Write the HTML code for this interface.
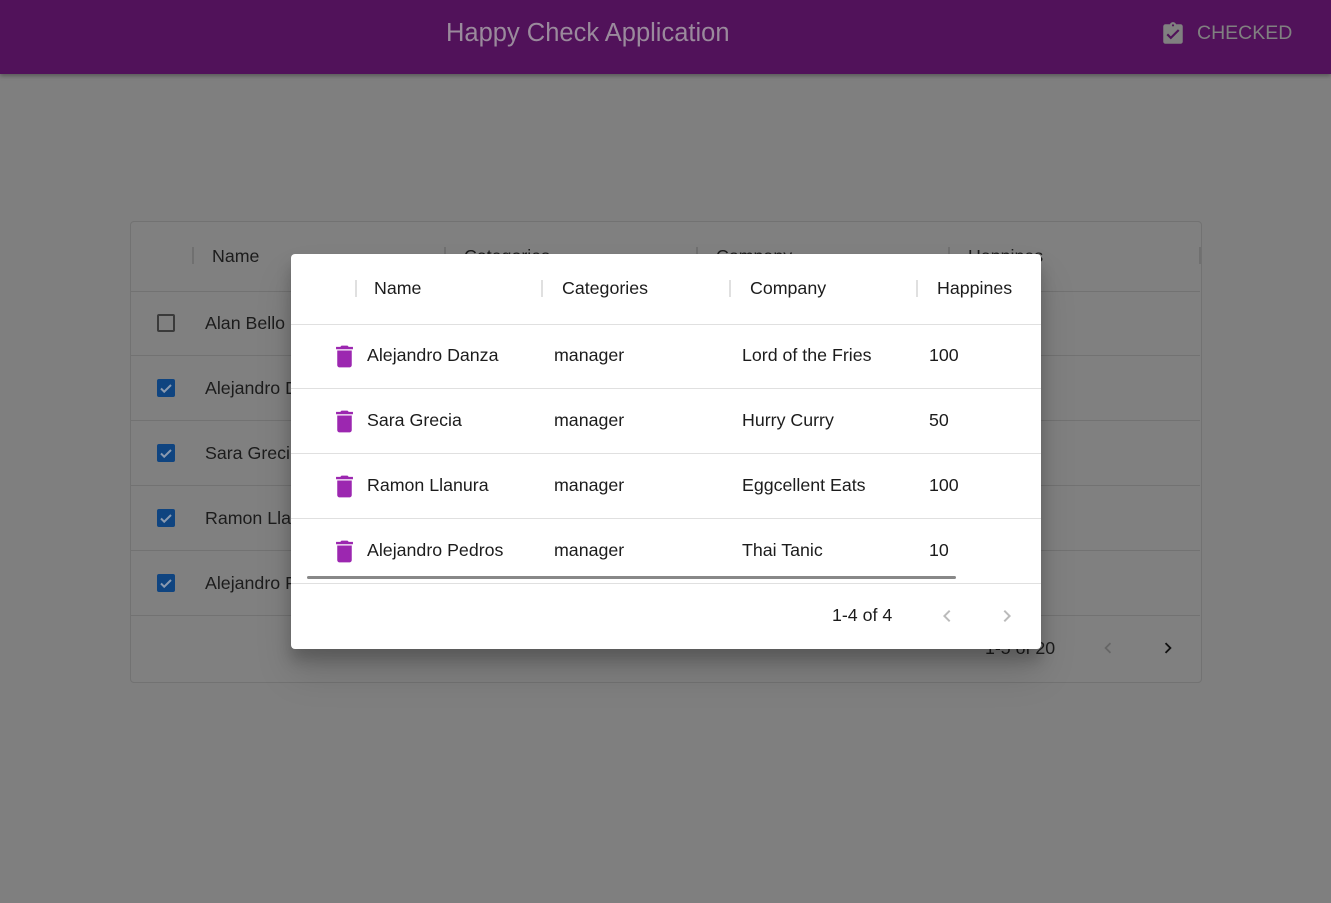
<!DOCTYPE html><html><head><style>
body{margin:0;width:1331px;height:903px;background:#7f7f7f;font-family:"Liberation Sans",sans-serif;position:relative;overflow:hidden;color:#1c1c1c}
.bar{position:absolute;left:0;top:0;width:1331px;height:74px;background:#51125a;box-shadow:0 2px 4px rgba(0,0,0,.3)}
.abs{position:absolute;white-space:nowrap}
.bg{position:absolute;left:130px;top:221px;width:1070px;height:460px;border:1px solid #727272;border-radius:4px;background:#808080}
.hl{position:absolute;height:1px;background:#727272}
.sep{position:absolute;width:2px;height:17px;background:#707070}
.cb{position:absolute;left:157px;width:18px;height:18px;border-radius:2px;background:#0f4480}
.modal{position:absolute;left:291px;top:254px;width:750px;height:395px;background:#fff;border-radius:4px;box-shadow:0 11px 15px rgba(0,0,0,.2),0 24px 38px rgba(0,0,0,.14)}
.ml{position:absolute;height:1px;background:#e0e0e0;left:0;width:750px}
.t{font-size:17.8px}
</style></head><body>
<div class="bar"></div>
<div class="abs" style="left:446px;top:19px;font-size:25.5px;color:#9a8a9c">Happy Check Application</div>
<svg class="abs" style="left:1160px;top:21px" width="26" height="26" viewBox="0 0 24 24"><path fill="#808080" d="M19 3h-4.18C14.4 1.84 13.3 1 12 1s-2.4.84-2.82 2H5c-1.1 0-2 .9-2 2v14c0 1.1.9 2 2 2h14c1.1 0 2-.9 2-2V5c0-1.1-.9-2-2-2zm-7 0c.55 0 1 .45 1 1s-.45 1-1 1-1-.45-1-1 .45-1 1-1zm-2 14l-4-4 1.41-1.41L10 14.17l6.59-6.59L18 9l-8 8z"/></svg>
<div class="abs" style="left:1197px;top:22px;font-size:19.5px;color:#808080">CHECKED</div>

<div class="bg"></div>
<div class="hl" style="left:131px;top:291px;width:1069px"></div>
<div class="hl" style="left:131px;top:355px;width:1069px"></div>
<div class="hl" style="left:131px;top:420px;width:1069px"></div>
<div class="hl" style="left:131px;top:485px;width:1069px"></div>
<div class="hl" style="left:131px;top:550px;width:1069px"></div>
<div class="hl" style="left:131px;top:615px;width:1069px"></div>
<div class="sep" style="left:192px;top:247px"></div>
<div class="sep" style="left:444px;top:247px"></div>
<div class="sep" style="left:696px;top:247px"></div>
<div class="sep" style="left:948px;top:247px"></div>
<div class="sep" style="left:1199px;top:247px"></div>
<div class="abs t" style="left:212px;top:246px">Name</div>
<div class="abs t" style="left:464px;top:246px">Categories</div>
<div class="abs t" style="left:716px;top:246px">Company</div>
<div class="abs t" style="left:968px;top:246px">Happines</div>
<div class="abs" style="left:157px;top:314px;width:14px;height:14px;border:2px solid #3a3a3a;border-radius:2px"></div>
<svg class="cb" style="top:379px" viewBox="0 0 18 18"><path d="M4 9.5l3.2 3.2L14 6" stroke="#8a9ab0" stroke-width="2" fill="none"/></svg>
<svg class="cb" style="top:444px" viewBox="0 0 18 18"><path d="M4 9.5l3.2 3.2L14 6" stroke="#8a9ab0" stroke-width="2" fill="none"/></svg>
<svg class="cb" style="top:509px" viewBox="0 0 18 18"><path d="M4 9.5l3.2 3.2L14 6" stroke="#8a9ab0" stroke-width="2" fill="none"/></svg>
<svg class="cb" style="top:574px" viewBox="0 0 18 18"><path d="M4 9.5l3.2 3.2L14 6" stroke="#8a9ab0" stroke-width="2" fill="none"/></svg>
<div class="abs t" style="left:205px;top:313px">Alan Bello</div>
<div class="abs t" style="left:205px;top:378px">Alejandro D</div>
<div class="abs t" style="left:205px;top:443px">Sara Greci</div>
<div class="abs t" style="left:205px;top:508px">Ramon Lla</div>
<div class="abs t" style="left:205px;top:573px">Alejandro P</div>
<div class="abs t" style="left:985px;top:638px">1-5 of 20</div>
<svg class="abs" style="left:1097px;top:637px" width="22" height="22" viewBox="0 0 24 24"><path d="M15.4 7.4L14 6l-6 6 6 6 1.4-1.4L10.8 12z" fill="#666"/></svg>
<svg class="abs" style="left:1157px;top:637px" width="22" height="22" viewBox="0 0 24 24"><path d="M10 6L8.6 7.4 13.2 12l-4.6 4.6L10 18l6-6z" fill="#111"/></svg>

<div class="modal">
<div class="ml" style="top:70px"></div><div class="ml" style="top:134px"></div><div class="ml" style="top:199px"></div><div class="ml" style="top:264px"></div><div class="ml" style="top:329px"></div>
<div class="abs" style="left:16px;top:322px;width:649px;height:3px;background:#888;border-radius:2px"></div>
<div class="abs" style="left:64px;top:26px;width:2px;height:17px;background:#e0e0e0"></div>
<div class="abs" style="left:250px;top:26px;width:2px;height:17px;background:#e0e0e0"></div>
<div class="abs" style="left:438px;top:26px;width:2px;height:17px;background:#e0e0e0"></div>
<div class="abs" style="left:625px;top:26px;width:2px;height:17px;background:#e0e0e0"></div>
<div class="abs t" style="left:83px;top:24px">Name</div>
<div class="abs t" style="left:271px;top:24px">Categories</div>
<div class="abs t" style="left:459px;top:24px">Company</div>
<div class="abs t" style="left:646px;top:24px">Happines</div>

<svg class="abs" style="left:39px;top:88px" width="29" height="29" viewBox="0 0 24 24"><path fill="#9c27b0" d="M6 19c0 1.1.9 2 2 2h8c1.1 0 2-.9 2-2V7H6v12zM19 4h-3.5l-1-1h-5l-1 1H5v2h14V4z"/></svg>
<svg class="abs" style="left:39px;top:153px" width="29" height="29" viewBox="0 0 24 24"><path fill="#9c27b0" d="M6 19c0 1.1.9 2 2 2h8c1.1 0 2-.9 2-2V7H6v12zM19 4h-3.5l-1-1h-5l-1 1H5v2h14V4z"/></svg>
<svg class="abs" style="left:39px;top:218px" width="29" height="29" viewBox="0 0 24 24"><path fill="#9c27b0" d="M6 19c0 1.1.9 2 2 2h8c1.1 0 2-.9 2-2V7H6v12zM19 4h-3.5l-1-1h-5l-1 1H5v2h14V4z"/></svg>
<svg class="abs" style="left:39px;top:283px" width="29" height="29" viewBox="0 0 24 24"><path fill="#9c27b0" d="M6 19c0 1.1.9 2 2 2h8c1.1 0 2-.9 2-2V7H6v12zM19 4h-3.5l-1-1h-5l-1 1H5v2h14V4z"/></svg>

<div class="abs t" style="left:76px;top:91px">Alejandro Danza</div><div class="abs t" style="left:263px;top:91px">manager</div><div class="abs t" style="left:451px;top:91px">Lord of the Fries</div><div class="abs t" style="left:638px;top:91px">100</div>
<div class="abs t" style="left:76px;top:156px">Sara Grecia</div><div class="abs t" style="left:263px;top:156px">manager</div><div class="abs t" style="left:451px;top:156px">Hurry Curry</div><div class="abs t" style="left:638px;top:156px">50</div>
<div class="abs t" style="left:76px;top:221px">Ramon Llanura</div><div class="abs t" style="left:263px;top:221px">manager</div><div class="abs t" style="left:451px;top:221px">Eggcellent Eats</div><div class="abs t" style="left:638px;top:221px">100</div>
<div class="abs t" style="left:76px;top:286px">Alejandro Pedros</div><div class="abs t" style="left:263px;top:286px">manager</div><div class="abs t" style="left:451px;top:286px">Thai Tanic</div><div class="abs t" style="left:638px;top:286px">10</div>
<div class="abs t" style="left:541px;top:351px">1-4 of 4</div>
<svg class="abs" style="left:644px;top:350px" width="24" height="24" viewBox="0 0 24 24"><path d="M15.4 7.4L14 6l-6 6 6 6 1.4-1.4L10.8 12z" fill="#bbb"/></svg>
<svg class="abs" style="left:704px;top:350px" width="24" height="24" viewBox="0 0 24 24"><path d="M10 6L8.6 7.4 13.2 12l-4.6 4.6L10 18l6-6z" fill="#bbb"/></svg>
</div>
</body></html>
